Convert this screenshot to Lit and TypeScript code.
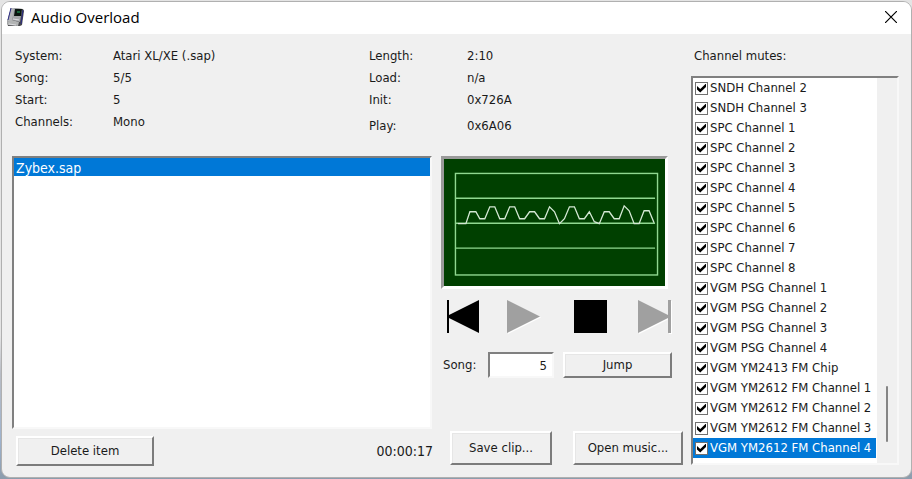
import { LitElement, html, css, svg } from "lit";
import { customElement, property } from "lit/decorators.js";
import { classMap } from "lit/directives/class-map.js";

const song = [
  ["System:", "Atari XL/XE (.sap)"],
  ["Song:", "5/5"],
  ["Start:", "5"],
  ["Channels:", "Mono"],
];
const addresses = [
  ["Length:", "2:10"],
  ["Load:", "n/a"],
  ["Init:", "0x726A"],
  ["Play:", "0x6A06"],
];
const channels = [
  "SNDH Channel 2", "SNDH Channel 3",
  ...[1, 2, 3, 4, 5, 6, 7, 8].map((n) => `SPC Channel ${n}`),
  ...[1, 2, 3, 4].map((n) => `VGM PSG Channel ${n}`),
  "VGM YM2413 FM Chip",
  ...[1, 2, 3, 4].map((n) => `VGM YM2612 FM Channel ${n}`),
];
const wave =
  "14,64 22,64 26,52 32,52 36,59 41,59 46,47 51,47 56,59 61,59 66,47 71,47 76,59 81,59 86,52 91,52 96,59 101,59 106,47 111,52 116,64 121,59 126,47 131,47 136,59 141,59 146,52 151,62 156,64 161,52 166,52 171,59 176,59 181,46 186,51 191,64 196,64 201,51 206,51 211,63";

@customElement("ao-scope")
export class AoScope extends LitElement {
  static styles = css`
    :host { display: block; }
    .plot { display: block; width: 100%; background: #004000; }
    .grid { fill: none; stroke: #90d890; stroke-width: 1.4; }
    .wave { fill: none; stroke: #d4e8d4; stroke-width: 1.3; }
  `;
  render() {
    return html`<svg class="plot" viewBox="0 -1 222 128" role="img" aria-label="Waveform">
      <rect class="grid" x="11.5" y="13.5" width="203" height="102"></rect>
      ${[38.5, 63.5, 88.5].map((y) => svg`<line class="grid" x1="11" x2="212" y1=${y} y2=${y}></line>`)}
      <polyline class="wave" points=${wave}></polyline>
    </svg>`;
  }
}

@customElement("ao-channels")
export class AoChannels extends LitElement {
  @property({ type: Number }) selected = channels.length - 1;
  static styles = css`
    :host { display: flex; background: #fff; }
    .rows { flex: 1; margin: 0; padding: 0 1px 0 0; list-style: none; min-width: 0; }
    .row { display: flex; align-items: center; gap: 2px; height: 20px; padding-left: 2px; white-space: nowrap; }
    .selected { color: #fff; background: #0078d7; }
    .tick { appearance: none; display: grid; place-items: center; flex: none; width: 13px; height: 13px; margin: 0; background: #fff; border: 1px solid #707070; }
    .tick:checked::after {
      content: ""; width: 9px; height: 9px; background: #000;
      clip-path: polygon(0 28%, 36% 60%, 100% 0, 100% 38%, 36% 100%, 0 68%);
    }
    .track { display: flex; flex-direction: column; justify-content: flex-end; align-items: center; width: 20px; padding-bottom: 21px; box-sizing: border-box; background: #f0f0f0; }
    .thumb { width: 2px; height: 56px; border-radius: 1px; background: #858585; }
  `;
  render() {
    return html`<ul class="rows">
        ${channels.map((name, i) => html`<li>
          <label class=${classMap({ row: true, selected: i === this.selected })}>
            <input class="tick" type="checkbox" checked />${name}
          </label>
        </li>`)}
      </ul>
      <div class="track"><div class="thumb"></div></div>`;
  }
}

@customElement("app-root")
export class AppRoot extends LitElement {
  static styles = css`
    :host {
      display: flex; box-sizing: border-box; min-height: 100vh; padding: 1px 0 1px 1px;
      background: linear-gradient(#e4e4e4 0 70%, #b8bcc4 78%, #9db2cd 92%, #8c9cac);
      font: 13px/20px Tahoma, "DejaVu Sans Condensed", sans-serif; color: #1a1a1a;
    }
    * { box-sizing: border-box; }
    button, input { font: inherit; color: inherit; }
    .window { flex: 1; display: flex; flex-direction: column; overflow: hidden; border: 1px solid #b0b0b0; border-radius: 9px; background: #f0f0f0; }
    .title { display: flex; align-items: center; gap: 6px; height: 32px; padding: 0 12px 2px 5px; background: #fff; }
    .name { flex: 1; margin: 0; font: 15px/20px "Segoe UI", "Open Sans", sans-serif; color: #000; }
    .close { display: flex; padding: 2px; border: 0; background: none; }
    .body { flex: 1; display: grid; grid-template-columns: minmax(0, 1fr) 242px 208px; grid-template-rows: 122px 1fr; column-gap: 8px; padding: 0 12px 12px 10px; }
    .facts { display: grid; grid-template-columns: 98px 1fr; grid-auto-rows: 22px; align-content: start; margin: 0; padding: 12px 0 0 3px; }
    .info { grid-column: 1 / 3; display: grid; grid-template-columns: 354px 1fr; }
    .facts dd { margin: 0; }
    .late dt:last-of-type, .late dd:last-of-type { padding-top: 4px; }
    .left, .middle, .right { display: flex; flex-direction: column; }
    .right { grid-column: 3; grid-row: 1 / 3; }
    .heading { margin: 0; padding: 12px 0 10px 3px; font: inherit; }
    .sunken { border: 2px solid; border-color: #808080 #f8f8f8 #f8f8f8 #808080; }
    .files { flex: 1; margin: 0 1px 0 0; padding: 0; list-style: none; background: #fff; }
    .file { height: 18px; padding: 0 2px; font-size: 14px; line-height: 20px; color: #fff; background: #0078d7; }
    .bottom { display: flex; align-items: center; justify-content: space-between; height: 36px; padding: 7px 0 0 4px; }
    .time { font-size: 14px; }
    .push { padding: 0; border: 2px solid; border-color: #fff #7c7c7c #7c7c7c #fff; background: #f0f0f0; box-shadow: inset 1px 1px #e6e6e6; }
    .delete { width: 138px; height: 30px; }
    .scope { width: 227px; border: 3px solid; border-color: #9a9a9a #fff #fff #9a9a9a; }
    .transport { display: grid; grid-template-columns: 61px 67px 64px 34px; margin: 11px 0 18px 5px; }
    .key { display: flex; padding: 0; border: 0; background: none; }
    .glyph { display: block; }
    .jump { display: grid; grid-template-columns: 45px 66px 109px; justify-content: start; align-items: center; padding-left: 2px; }
    .jump .push { height: 26px; margin-left: 9px; width: 109px; }
    .number { width: 66px; height: 26px; padding: 0 5px; text-align: right; background: #fff; outline: 0; }
    .actions { display: flex; justify-content: space-between; margin-top: auto; padding-left: 9px; }
    .save { width: 102px; height: 34px; }
    .open { width: 110px; height: 34px; }
    .list { flex: 1; }
  `;

  private facts(rows: string[][], extra = "") {
    return html`<dl class="facts ${extra}">${rows.map(([k, v]) => html`<dt>${k}</dt><dd>${v}</dd>`)}</dl>`;
  }

  private key(label: string, path: string, disabled = false) {
    return html`<button class="key" aria-label=${label} ?disabled=${disabled}>
      <svg class="glyph" width="34" height="34" aria-hidden="true">
        ${disabled ? svg`<path d=${path} fill="#fff" transform="translate(1 1)"></path>` : ""}
        <path d=${path} fill=${disabled ? "#a0a0a0" : "#000"}></path>
      </svg>
    </button>`;
  }

  render() {
    return html`<main class="window">
      <header class="title">
        <svg width="18" height="20" viewBox="0 0 18 20" aria-hidden="true">
          <path d="M4 1 16 2 17 4 15 18 13 19 1 19 0 15Z" fill="#48484c"></path>
          <path d="M4 1 8 1 5 14 0 15Z" fill="#b4b6ba"></path>
          <path d="M0 15 5 13 12 15 11 19 1 18Z" fill="#b2b4b4"></path>
          <path d="M7 1 15 2 13 15 5 13Z" fill="#a4a6aa"></path>
          <path d="M8 2 15 2 14 9 7 9Z" fill="#0a1410"></path>
          <path d="M10 4h3v2h-3z" fill="#17633a"></path>
          <path d="M16 3 14 17M4 1 1 13" fill="none" stroke="#2c2c84" stroke-width="1"></path>
          <path d="M6 12 12 13M2 17 9 18" fill="none" stroke="#dcdce0"></path>
        </svg>
        <h1 class="name">Audio Overload</h1>
        <button class="close" aria-label="Close">
          <svg width="12" height="12" viewBox="0 0 12 12"><path d="M0 0 12 12M12 0 0 12" stroke="#000" stroke-width="1.2"></path></svg>
        </button>
      </header>
      <div class="body">
        <section class="info">${this.facts(song)}${this.facts(addresses, "late")}</section>
        <section class="left">
          <ul class="files sunken"><li class="file">Zybex.sap</li></ul>
          <div class="bottom"><button class="push delete">Delete item</button><time class="time">00:00:17</time></div>
        </section>
        <section class="middle">
          <ao-scope class="scope"></ao-scope>
          <div class="transport">
            ${this.key("Previous", "M1 0h2v15L33 0v33L3 18v15H1z")}
            ${this.key("Play", "M0 0v33l33-16.5z", true)}
            ${this.key("Stop", "M0 0h33v33H0z")}
            ${this.key("Next", "M0 0v33l30-15v15h3V0h-3v15z", true)}
          </div>
          <div class="jump">
            <label for="song">Song:</label>
            <input class="number sunken" id="song" value="5" />
            <button class="push">Jump</button>
          </div>
          <div class="actions"><button class="push save">Save clip...</button><button class="push open">Open music...</button></div>
        </section>
        <section class="right">
          <h2 class="heading">Channel mutes:</h2>
          <ao-channels class="list sunken"></ao-channels>
        </section>
      </div>
    </main>`;
  }
}
